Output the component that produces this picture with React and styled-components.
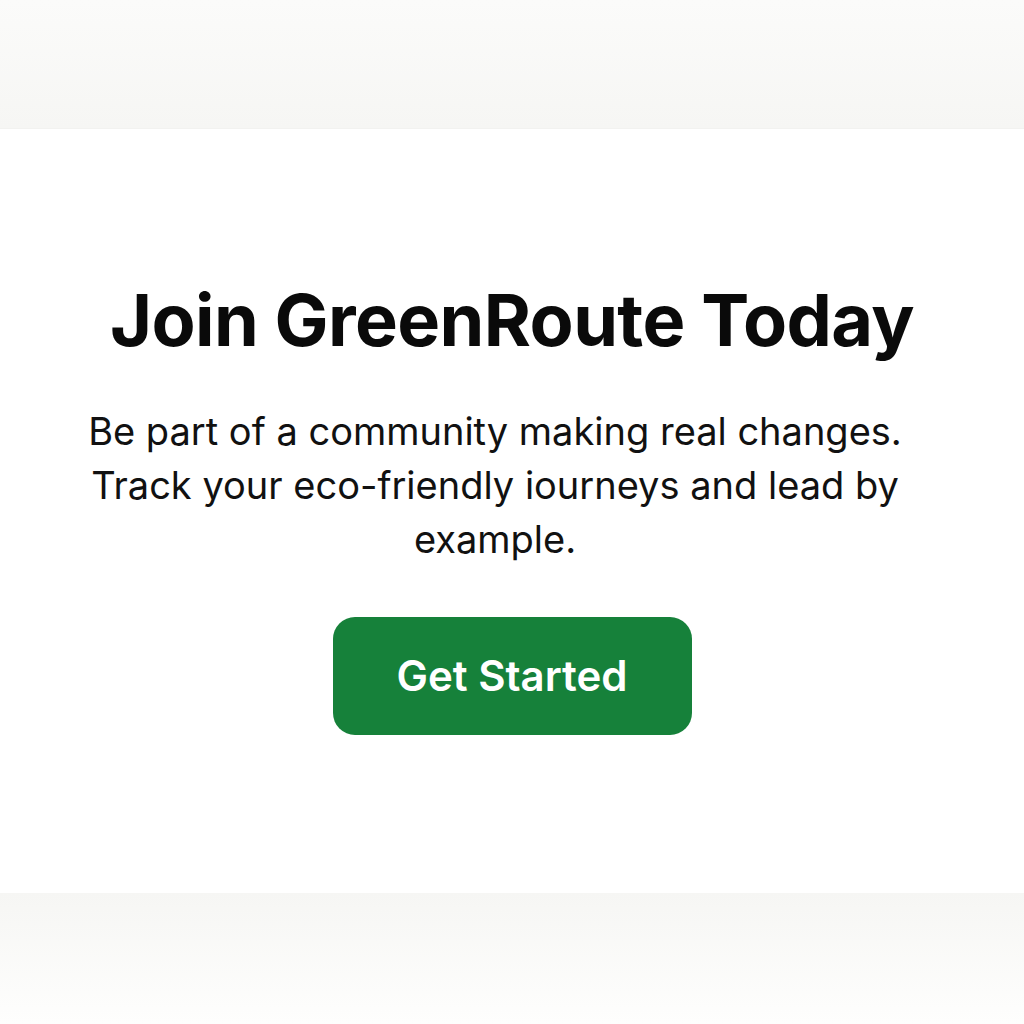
import React from 'react';
import styled, { createGlobalStyle } from 'styled-components';

const GlobalStyle = createGlobalStyle`
  html, body {
    margin: 0;
    padding: 0;
    background: #ffffff;
  }
  body {
    font-family: Inter, "Noto Sans", "Liberation Sans", sans-serif;
  }
`;

const Page = styled.div`
  display: flex;
  flex-direction: column;
  width: 1024px;
  height: 1024px;
`;

const TopBand = styled.div`
  height: 128px;
  background: linear-gradient(#fbfbfa, #f6f6f4);
  border-bottom: 1px solid #f2f2f0;
`;

const BottomBand = styled.div`
  height: 131px;
  background: linear-gradient(#f6f6f4, #fefefd);
`;

const Hero = styled.section`
  flex: 1;
  display: flex;
  flex-direction: column;
  align-items: center;
  justify-content: center;
  padding-bottom: 10px;
  text-align: center;
`;

const Title = styled.h1`
  margin: 0;
  font-size: 72px;
  font-weight: 700;
  letter-spacing: -0.6px;
  line-height: 1.2;
  color: #0a0a0a;
`;

const Lead = styled.p`
  margin: 40px 0 0;
  max-width: 840px;
  padding-right: 34px;
  font-size: 38px;
  line-height: 54px;
  font-weight: 400;
  color: #111;
`;

const CtaButton = styled.button`
  margin-top: 51px;
  width: 359px;
  height: 118px;
  border: none;
  border-radius: 22px;
  background: #16813a;
  color: #ffffff;
  font-family: inherit;
  font-size: 42px;
  font-weight: 600;
  cursor: pointer;
`;

export default function App() {
  return (
    <Page>
      <GlobalStyle />
      <TopBand />
      <Hero>
        <Title>Join GreenRoute Today</Title>
        <Lead>
          Be part of a community making real changes. Track your eco-friendly iourneys and lead by example.
        </Lead>
        <CtaButton>Get Started</CtaButton>
      </Hero>
      <BottomBand />
    </Page>
  );
}
